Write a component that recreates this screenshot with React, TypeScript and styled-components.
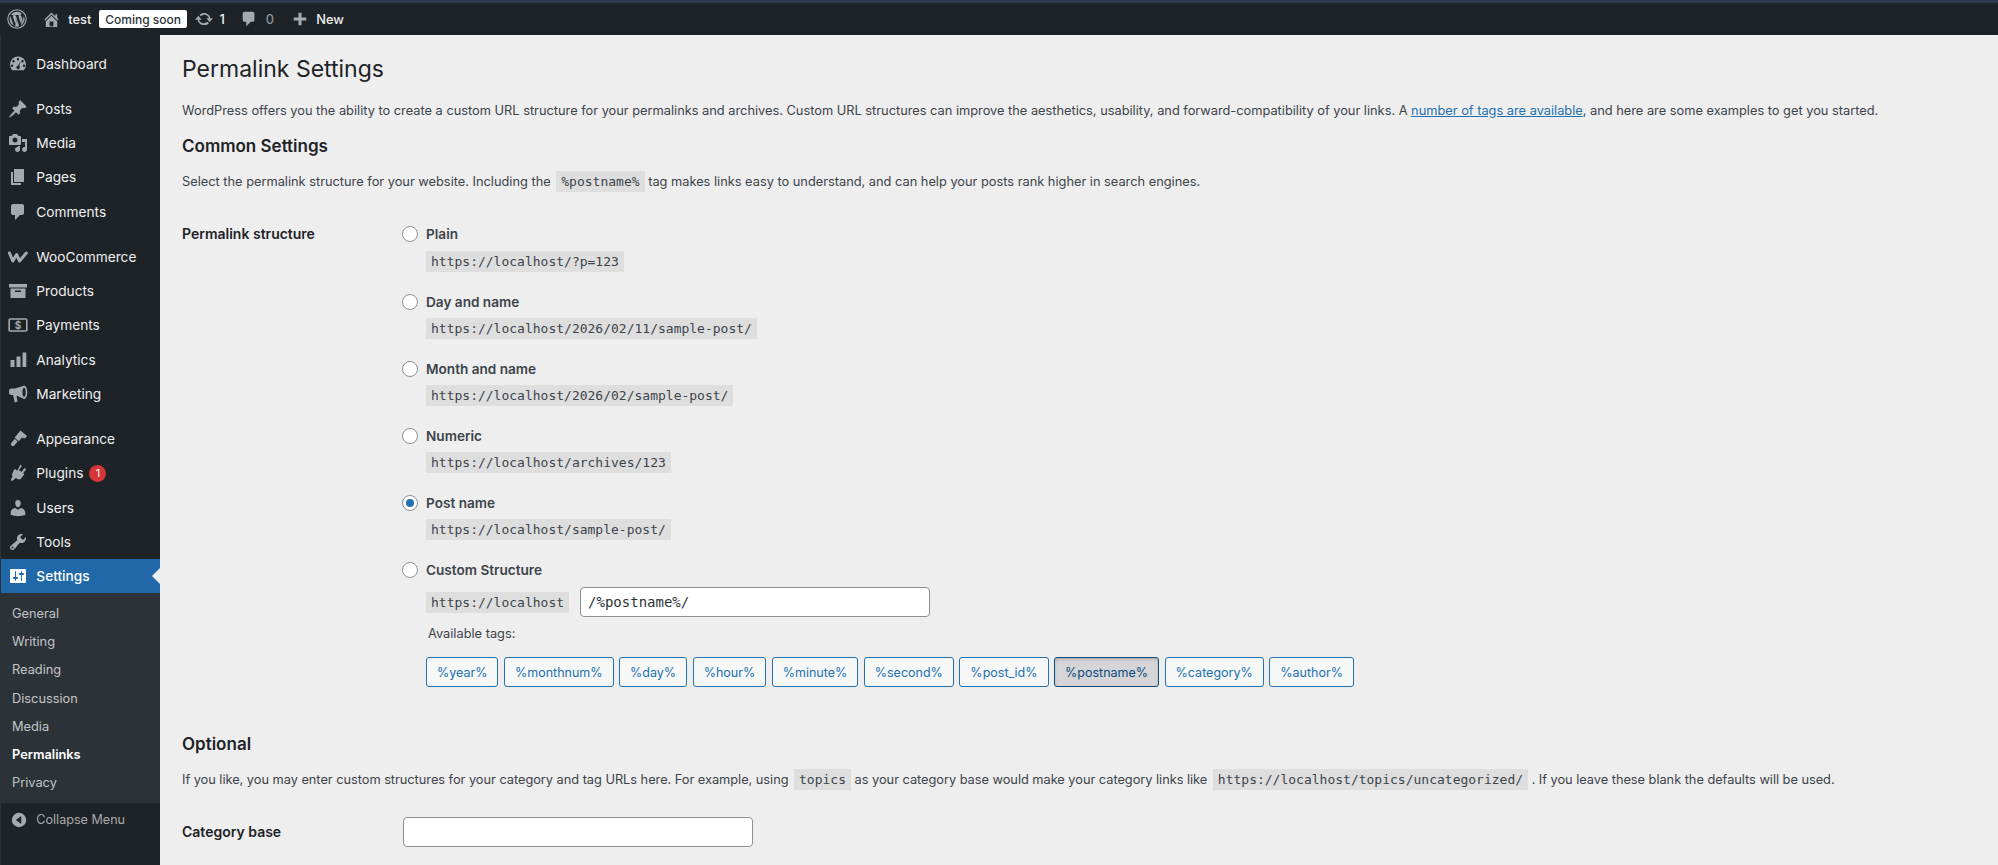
import React from 'react';
import styled, { createGlobalStyle } from 'styled-components';

const SANS = `Inter, "Liberation Sans", sans-serif`;
const MONO = `"DejaVu Sans Mono", "Liberation Mono", monospace`;

const Global = createGlobalStyle`
  html, body { margin: 0; padding: 0; height: 100%; }
  body { background: #eeeeee; font-family: ${SANS}; overflow: hidden; }
  * { box-sizing: border-box; }
`;

type IconName =
  | 'dashboard' | 'posts' | 'media' | 'pages' | 'comments' | 'woo' | 'products' | 'payments'
  | 'analytics' | 'marketing' | 'appearance' | 'plugins' | 'users' | 'tools' | 'settings';

function MenuIcon({ name }: { name: IconName }) {
  const p = { fill: 'currentColor' };
  switch (name) {
    case 'dashboard':
      return (
        <svg viewBox="0 0 20 20" {...p}>
          <path fillRule="evenodd" d="M10 2.500a8 8 0 0 0-8 8c0 2.200.9 4.200 2.300 5.700h11.400A8 8 0 0 0 18 10.500a8 8 0 0 0-8-8zM10 4a1.200 1.200 0 1 1 0 2.400A1.200 1.200 0 0 1 10 4zM5.500 6a1.200 1.200 0 1 1 0 2.400 1.200 1.200 0 0 1 0-2.400zm9 0a1.200 1.200 0 1 1 0 2.400 1.200 1.200 0 0 1 0-2.400zM4 10.500a1.200 1.200 0 1 1 0 2.400 1.200 1.200 0 0 1 0-2.400zm12 0a1.200 1.200 0 1 1 0 2.400 1.200 1.200 0 0 1 0-2.400zM12.800 7l-1.600 5a1.700 1.700 0 1 1-1.300-.3z" />
        </svg>
      );
    case 'posts':
      return <svg viewBox="0 0 20 20" {...p}><path d="M10.440 3.020l1.820-1.820 6.360 6.350-1.830 1.820c-1.050-.680-2.480-.570-3.410.360l-.750.750c-.920.930-1.040 2.350-.350 3.410l-1.830 1.820-2.410-2.410-2.800 2.790c-.420.420-3.380 2.710-3.800 2.290s1.860-3.390 2.280-3.810l2.790-2.790L4.100 9.360l1.830-1.820c1.050.690 2.480.570 3.400-.360l.750-.750c.930-.920 1.050-2.350.360-3.410z" /></svg>;
    case 'media':
      return <svg viewBox="0 0 20 20" {...p}><path d="M13 11V4c0-.550-.450-1-1-1h-1.670L9 1H5L3.670 3H2c-.550 0-1 .450-1 1v7c0 .550.450 1 1 1h10c.550 0 1-.450 1-1zM7 4.500c1.380 0 2.500 1.120 2.500 2.500S8.380 9.500 7 9.500 4.500 8.380 4.500 7 5.620 4.500 7 4.500zM14 6h5v10.500c0 1.380-1.120 2.500-2.500 2.500S14 17.880 14 16.500s1.120-2.500 2.500-2.500c.170 0 .340.020.500.050V9h-3V6zm-4 8.050V13h2v3.500c0 1.380-1.120 2.500-2.500 2.500S7 17.880 7 16.500 8.120 14 9.500 14c.170 0 .340.020.500.050z" /></svg>;
    case 'pages':
      return <svg viewBox="0 0 20 20" {...p}><path d="M6 15V2h10v13H6zm-1 1h8v2H3V5h2v11z" /></svg>;
    case 'comments':
      return <svg viewBox="0 0 20 20" {...p}><path d="M5 2h9c1.100 0 2 .9 2 2v7c0 1.100-.9 2-2 2h-2l-5 5v-5H5c-1.100 0-2-.9-2-2V4c0-1.100.9-2 2-2z" /></svg>;
    case 'woo':
      return <svg viewBox="0 0 20 20"><path d="M1.500 6 L4.800 14 L8.600 7.500 L11.600 14 L18.300 6" fill="none" stroke="currentColor" strokeWidth="3" strokeLinejoin="round" strokeLinecap="round" /></svg>;
    case 'products':
      return <svg viewBox="0 0 20 20" {...p}><path d="M1 3h18v3.500H1z" /><path fillRule="evenodd" d="M2.500 7.500h15V17h-15zM7 9.500v1.500h6V9.500z" /></svg>;
    case 'payments':
      return (
        <svg viewBox="0 0 20 20">
          <rect x="1.200" y="4" width="17.600" height="12" rx="1" fill="none" stroke="currentColor" strokeWidth="1.600" />
          <text x="10" y="14" textAnchor="middle" fontSize="10" fontWeight="700" fill="currentColor" fontFamily="Inter, sans-serif">$</text>
        </svg>
      );
    case 'analytics':
      return <svg viewBox="0 0 20 20" {...p}><path d="M2.500 10h4v7h-4zM8.500 6.500h4V17h-4zM14.500 2.500h3.800V17h-3.800z" /></svg>;
    case 'marketing':
      return <svg viewBox="0 0 20 20" {...p}><path fillRule="evenodd" d="M16 1.500c1.900 0 3.300 3 3.300 6.800s-1.400 6.800-3.300 6.800c-.6 0-1.100-.3-1.600-.8L8.500 11.500 9.500 17.500 6.800 18.500 5 11H3.500A2.500 2.500 0 0 1 1 8.500v-1.500A2.500 2.500 0 0 1 3.500 4.500H7l7.500-2.300c.400-.5 1-.7 1.500-.7zm.1 2.200c-.9 0-1.600 2-1.600 4.600s.7 4.600 1.600 4.600 1.600-2 1.600-4.600-.7-4.600-1.600-4.600z" /></svg>;
    case 'appearance':
      return <svg viewBox="0 0 20 20" {...p}><path d="M12.400 1.500 19 7l-2 2.500-1.300-.9-.5.900-1.300-.900-3 3.600-2.200-1.700-.5.700 1.500 1.300-3.200 3.800c-.8 1-1.800 1.100-2.800.4-1-.8-1-1.900-.2-2.900l3.200-3.800 1.500 1.100.5-.6-2.100-1.800z" /></svg>;
    case 'plugins':
      return <svg viewBox="0 0 20 20" {...p}><path d="M12.300 1.800l1.700 1.300-3.100 4 2.500 1.900 3.100-4 1.700 1.300-3.100 4 1.300 1-3.300 4.300c-1 1.200-2.700 1.300-4.100.2l-1.100-.9-3.700 3-1.600-.6 1.900-4.100-.700-1.500L5.500 7.800 7 5.900l2.200 1.800z" /></svg>;
    case 'users':
      return <svg viewBox="0 0 20 20" {...p}><path d="M10 9.250c-2.270 0-2.730-3.440-2.730-3.440C7 4.020 7.820 2 9.970 2c2.160 0 2.980 2.020 2.710 3.810 0 0-.410 3.440-2.680 3.440zm0 2.570L12.720 10c2.390 0 4.520 2.330 4.520 4.530v2.490s-3.650 1.130-7.240 1.130c-3.650 0-7.240-1.130-7.240-1.130v-2.490c0-2.250 1.940-4.480 4.470-4.480z" /></svg>;
    case 'tools':
      return <svg viewBox="0 0 20 20" {...p}><path d="M16.680 9.770c-1.340 1.340-3.300 1.670-4.950.990l-5.410 6.520c-.990.990-2.590.990-3.570 0s-.990-2.580 0-3.570l6.520-5.420c-.680-1.650-.350-3.610.990-4.950 1.280-1.280 3.120-1.620 4.720-1.060l-2.890 2.890 2.820 2.820 2.860-2.870c.530 1.580.180 3.410-1.090 4.650zM3.810 16.210c.400.390 1.030.390 1.420 0 .400-.400.400-1.030 0-1.430-.390-.390-1.020-.390-1.420 0-.390.400-.390 1.030 0 1.430z" /></svg>;
    case 'settings':
      return <svg viewBox="0 0 20 20" {...p}><path fillRule="evenodd" d="M18 16V4c0-.550-.450-1-1-1H3c-.550 0-1 .450-1 1v12c0 .550.450 1 1 1h14c.550 0 1-.450 1-1zM8 11h1c.550 0 1 .450 1 1s-.450 1-1 1H8v1.500c0 .280-.220.500-.500.500s-.500-.220-.500-.500V13H6c-.550 0-1-.450-1-1s.450-1 1-1h1V5.500c0-.280.220-.500.500-.500s.500.220.500.500V11zm5-2h-1c-.550 0-1-.450-1-1s.450-1 1-1h1V5.500c0-.280.220-.500.500-.500s.500.220.500.500V7h1c.550 0 1 .450 1 1s-.450 1-1 1h-1v5.500c0 .280-.220.500-.500.500s-.500-.220-.500-.500V9z" /></svg>;
  }
}

type MenuEntry = { name: IconName; label: string; badge?: string; gapBefore?: boolean };

const MENU: MenuEntry[] = [
  { name: 'dashboard', label: 'Dashboard' },
  { name: 'posts', label: 'Posts', gapBefore: true },
  { name: 'media', label: 'Media' },
  { name: 'pages', label: 'Pages' },
  { name: 'comments', label: 'Comments' },
  { name: 'woo', label: 'WooCommerce', gapBefore: true },
  { name: 'products', label: 'Products' },
  { name: 'payments', label: 'Payments' },
  { name: 'analytics', label: 'Analytics' },
  { name: 'marketing', label: 'Marketing' },
  { name: 'appearance', label: 'Appearance', gapBefore: true },
  { name: 'plugins', label: 'Plugins', badge: '1' },
  { name: 'users', label: 'Users' },
  { name: 'tools', label: 'Tools' },
];

const SUBMENU = ['General', 'Writing', 'Reading', 'Discussion', 'Media', 'Permalinks', 'Privacy'];

const STRUCTURES = [
  { label: 'Plain', url: 'https://localhost/?p=123' },
  { label: 'Day and name', url: 'https://localhost/2026/02/11/sample-post/' },
  { label: 'Month and name', url: 'https://localhost/2026/02/sample-post/' },
  { label: 'Numeric', url: 'https://localhost/archives/123' },
  { label: 'Post name', url: 'https://localhost/sample-post/', checked: true },
];

const TAGS = ['%year%', '%monthnum%', '%day%', '%hour%', '%minute%', '%second%', '%post_id%', '%postname%', '%category%', '%author%'];

export default function App() {
  return (
    <>
      <Global />
      <Page>
        <AdminBar>
          <BarLogo viewBox="0 0 20 20">
            <circle cx="10" cy="10" r="9.200" fill="none" stroke="currentColor" strokeWidth="1.100" />
            <path fill="currentColor" d="M2.600 10c0 2.900 1.700 5.400 4.100 6.600L3.200 7a7.400 7.400 0 0 0-.6 3zm12.400-.4c0-.9-.3-1.500-.6-2-.4-.6-.7-1.100-.7-1.700 0-.7.500-1.300 1.200-1.300h.1A7.400 7.400 0 0 0 3.800 6l.5 0c.8 0 2-.1 2-.1.400 0 .5.600.1.600 0 0-.4.100-.9.100l2.800 8.300 1.700-5-1.200-3.300c-.4 0-.8-.1-.8-.1-.4 0-.4-.600 0-.6 0 0 1.300.1 2 .1.800 0 2-.1 2-.1.400 0 .5.600.1.600 0 0-.4.100-.9.100l2.800 8.200.8-2.600c.3-1.100.6-1.900.6-2.600zM10.100 10.700l-2.300 6.700a7.400 7.400 0 0 0 4.500-.1l-.1-.1zm6.500-4.300.1.800c0 .7-.1 1.600-.6 2.700l-2.300 6.500a7.400 7.400 0 0 0 2.800-10z" />
          </BarLogo>
          <BarIcon viewBox="0 0 20 20" $size={19} $ml={15.400}>
            <path fill="currentColor" d="M16 8.500l1.530 1.530-1.060 1.060L10 4.620l-6.470 6.470-1.060-1.060L10 2.500l4 4v-2h2v4zm-6-2.460l6 5.990V18H4v-5.970zM12 17v-5H8v5h4z" />
          </BarIcon>
          <BarText $ml={6.900}>test</BarText>
          <ComingSoon>Coming soon</ComingSoon>
          <BarIcon viewBox="0 0 20 20" $size={18} $ml={7.500}>
            <path fill="currentColor" d="M10.200 3.280c3.530 0 6.430 2.610 6.930 6.010h2.730l-3.600 4.350-3.600-4.350h2.790c-.500-2.310-2.500-4-5.250-4-1.500 0-2.770.640-3.710 1.660L5.100 5.150c1.250-1.150 3.100-1.870 5.100-1.870zm-.400 13.440c-3.520 0-6.430-2.610-6.930-6H.140l3.600-4.350 3.600 4.350H4.550c.500 2.320 2.510 4 5.250 4 1.500 0 2.790-.640 3.730-1.640l1.930 1.800c-1.280 1.150-3.130 1.840-5.660 1.840z" />
          </BarIcon>
          <BarText $ml={7}>1</BarText>
          <BarIcon viewBox="0 0 20 20" $size={18} $ml={15}>
            <path fill="currentColor" d="M5 2h9c1.100 0 2 .9 2 2v7c0 1.100-.9 2-2 2h-2l-5 5v-5H5c-1.100 0-2-.9-2-2V4c0-1.100.9-2 2-2z" />
          </BarIcon>
          <BarText $ml={8} $dim>0</BarText>
          <BarIcon viewBox="0 0 20 20" $size={18} $ml={16.500}>
            <path fill="currentColor" d="M8.300 3h3.400v5.300H17v3.400h-5.300V17H8.300v-5.300H3V8.300h5.300z" />
          </BarIcon>
          <BarText $ml={7.700}>New</BarText>
        </AdminBar>

        <Body>
          <Sidebar>
            <MenuList>
              {MENU.map((item) => (
                <MenuItem key={item.label} $gap={item.gapBefore}>
                  <IconSlot><MenuIcon name={item.name} /></IconSlot>
                  {item.label}
                  {item.badge && <Badge>{item.badge}</Badge>}
                </MenuItem>
              ))}
              <ActiveItem>
                <IconSlot $active><MenuIcon name="settings" /></IconSlot>
                Settings
                <ActiveArrow />
              </ActiveItem>
              <SubMenu>
                {SUBMENU.map((s) => (
                  <SubItem key={s} $current={s === 'Permalinks'}>{s}</SubItem>
                ))}
              </SubMenu>
              <Collapse>
                <CollapseIcon viewBox="0 0 20 20">
                  <path fill="currentColor" fillRule="evenodd" d="M10 2a8 8 0 1 1 0 16 8 8 0 0 1 0-16zm2.500 3.500L6.500 10l6 4.500z" />
                </CollapseIcon>
                Collapse Menu
              </Collapse>
            </MenuList>
          </Sidebar>

          <Content>
            <Title>Permalink Settings</Title>
            <Intro>
              WordPress offers you the ability to create a custom URL structure for your permalinks and archives. Custom URL structures can improve the aesthetics, usability, and forward-compatibility of your links. A <DocLink>number of tags are available</DocLink>, and here are some examples to get you started.
            </Intro>
            <SectionTitle>Common Settings</SectionTitle>
            <Para>
              Select the permalink structure for your website. Including the <InlineCode>%postname%</InlineCode> tag makes links easy to understand, and can help your posts rank higher in search engines.
            </Para>

            <FormRow>
              <RowLabel>Permalink structure</RowLabel>
              <Options>
                {STRUCTURES.map((s) => (
                  <Option key={s.label}>
                    <RadioLine>
                      <Radio $checked={s.checked} />
                      <OptionLabel>{s.label}</OptionLabel>
                    </RadioLine>
                    <OptionValue><Code>{s.url}</Code></OptionValue>
                  </Option>
                ))}
                <Option>
                  <RadioLine>
                    <Radio />
                    <OptionLabel>Custom Structure</OptionLabel>
                  </RadioLine>
                  <CustomLine>
                    <Code>https://localhost</Code>
                    <TextInput $width={350} $mono defaultValue="/%postname%/" />
                  </CustomLine>
                  <TagsLabel>Available tags:</TagsLabel>
                  <Tags>
                    {TAGS.map((t) => (
                      <TagButton key={t} $pressed={t === '%postname%'}>{t}</TagButton>
                    ))}
                  </Tags>
                </Option>
              </Options>
            </FormRow>

            <OptionalTitle>Optional</OptionalTitle>
            <OptionalPara>
              If you like, you may enter custom structures for your category and tag URLs here. For example, using <InlineCode>topics</InlineCode> as your category base would make your category links like <InlineCode>https://localhost/topics/uncategorized/</InlineCode> . If you leave these blank the defaults will be used.
            </OptionalPara>
            <BaseRow>
              <RowLabel>Category base</RowLabel>
              <BaseInput $width={350} />
            </BaseRow>
          </Content>
        </Body>
      </Page>
    </>
  );
}

const Page = styled.div`
  width: 1998px;
  height: 865px;
  display: flex;
  flex-direction: column;
  overflow: hidden;
  color: #1d2327;
`;

const AdminBar = styled.div`
  height: 35px;
  flex: none;
  display: flex;
  align-items: center;
  padding-left: 7px;
  background: #1d2327;
  border-top: 3px solid #2e3a4d;
  color: #a7aaad;
`;

const BarLogo = styled.svg`
  width: 20px;
  height: 20px;
  flex: none;
`;

const BarIcon = styled.svg<{ $size: number; $ml: number }>`
  width: ${(p) => p.$size}px;
  height: ${(p) => p.$size}px;
  margin-left: ${(p) => p.$ml}px;
  flex: none;
`;

const BarText = styled.span<{ $ml: number; $dim?: boolean }>`
  margin-left: ${(p) => p.$ml}px;
  font-size: 12.800px;
  font-weight: 500;
  color: ${(p) => (p.$dim ? '#8c8f94' : '#f0f0f1')};
`;

const ComingSoon = styled.span`
  margin-left: 8px;
  height: 18px;
  padding: 0 6px;
  display: flex;
  align-items: center;
  border-radius: 2px;
  background: #fff;
  color: #2c3338;
  font-size: 12px;
  font-weight: 500;
`;

const Body = styled.div`
  flex: 1;
  display: flex;
  min-height: 0;
`;

const Sidebar = styled.div`
  width: 160px;
  flex: none;
  background: #1d2327;
  border-left: 1px solid #2c3338;
`;

const MenuList = styled.div`
  display: flex;
  flex-direction: column;
  padding-top: 11.500px;
`;

const MenuItem = styled.div<{ $gap?: boolean }>`
  height: 34.300px;
  flex: none;
  display: flex;
  align-items: center;
  margin-top: ${(p) => (p.$gap ? '10.800px' : '0')};
  color: #f0f0f1;
  font-size: 13.700px;
`;

const IconSlot = styled.span<{ $active?: boolean }>`
  width: 35.300px;
  padding-left: 7px;
  flex: none;
  display: flex;
  color: ${(p) => (p.$active ? '#fff' : '#a7aaad')};

  svg {
    width: 20px;
    height: 20px;
  }
`;

const Badge = styled.span`
  width: 17px;
  height: 17px;
  margin-left: 6px;
  border-radius: 50%;
  display: flex;
  align-items: center;
  justify-content: center;
  background: #d63638;
  color: #fff;
  font-size: 11px;
`;

const ActiveItem = styled(MenuItem)`
  position: relative;
  background: #2068a8;
  color: #fff;
  font-weight: 500;
`;

const ActiveArrow = styled.span`
  position: absolute;
  right: 0;
  top: 50%;
  margin-top: -8px;
  border: 8px solid transparent;
  border-left-width: 0;
  border-right-color: #eeeeee;
`;

const SubMenu = styled.div`
  display: flex;
  flex-direction: column;
  padding: 6px 0;
  background: #2c3338;
`;

const SubItem = styled.div<{ $current?: boolean }>`
  height: 28.200px;
  padding-left: 11px;
  display: flex;
  align-items: center;
  font-size: 12.800px;
  font-weight: ${(p) => (p.$current ? 600 : 400)};
  color: ${(p) => (p.$current ? '#fff' : '#c3c4c7')};
`;

const Collapse = styled.div`
  height: 34px;
  display: flex;
  align-items: center;
  padding-left: 9px;
  color: #a7aaad;
  font-size: 12.600px;
`;

const CollapseIcon = styled.svg`
  width: 18px;
  height: 18px;
  margin-right: 8.300px;
`;

const Content = styled.div`
  flex: 1;
  min-width: 0;
  padding: 20px 0 0 22px;
  font-size: 12.800px;
  background: #eeeeee;
`;

const Title = styled.h1`
  margin: 0;
  font-size: 23px;
  line-height: 29px;
  font-weight: 400;
  color: #1d2327;
`;

const Intro = styled.p`
  margin: 17.700px 0 0;
  line-height: 18px;
  color: #3c434a;
  white-space: nowrap;
`;

const DocLink = styled.a`
  color: #2271b1;
  text-decoration: underline;
`;

const SectionTitle = styled.h2`
  margin: 15.300px 0 0;
  font-size: 17px;
  line-height: 22px;
  font-weight: 600;
  color: #1d2327;
`;

const OptionalTitle = styled(SectionTitle)`
  margin-top: 46px;
`;

const Para = styled.p`
  margin: 13px 0 0;
  line-height: 24px;
  color: #3c434a;
  white-space: nowrap;
`;

const OptionalPara = styled(Para)`
  letter-spacing: -0.030px;
`;

const Code = styled.code`
  display: inline-block;
  height: 21px;
  line-height: 21px;
  padding: 0 5px;
  background: #dedede;
  color: #3c434a;
  font-family: ${MONO};
  font-size: 13px;
  letter-spacing: 0;
`;

const InlineCode = styled(Code)`
  margin-left: 2px;
`;

const FormRow = styled.div`
  display: flex;
  margin-top: 31.500px;
`;

const RowLabel = styled.div`
  width: 220px;
  flex: none;
  font-size: 14px;
  line-height: 18px;
  font-weight: 600;
  color: #1d2327;
`;

const Options = styled.div`
  display: flex;
  flex-direction: column;
  gap: 21px;
`;

const Option = styled.div`
  display: flex;
  flex-direction: column;
`;

const RadioLine = styled.div`
  display: flex;
  align-items: center;
  height: 18px;
`;

const Radio = styled.span<{ $checked?: boolean }>`
  width: 16px;
  height: 16px;
  border-radius: 50%;
  border: 1px solid #8c8f94;
  background: #fff;
  display: flex;
  align-items: center;
  justify-content: center;
  flex: none;

  &::after {
    content: '';
    display: ${(p) => (p.$checked ? 'block' : 'none')};
    width: 8px;
    height: 8px;
    border-radius: 50%;
    background: #2271b1;
  }
`;

const OptionLabel = styled.span`
  margin-left: 8px;
  font-size: 13.600px;
  font-weight: 600;
  color: #3c434a;
`;

const OptionValue = styled.div`
  display: flex;
  margin: 7.200px 0 0 24px;
`;

const CustomLine = styled.div`
  margin: 8px 0 0 24px;
  display: flex;
  align-items: center;
  gap: 11px;
`;

const TextInput = styled.input<{ $width: number; $mono?: boolean }>`
  width: ${(p) => p.$width}px;
  height: 30px;
  padding: 0 7px;
  border: 1px solid #8c8f94;
  border-radius: 4px;
  background: #fff;
  color: #2c3338;
  font-family: ${(p) => (p.$mono ? MONO : SANS)};
  font-size: 14px;
  outline: none;
`;

const BaseInput = styled(TextInput)`
  margin-left: 1px;
`;

const TagsLabel = styled.div`
  margin: 8px 0 0 26px;
  font-size: 12.800px;
  line-height: 18px;
  color: #3c434a;
`;

const Tags = styled.div`
  margin: 14px 0 0 24px;
  display: flex;
  gap: 5.500px;
`;

const TagButton = styled.button<{ $pressed?: boolean }>`
  height: 30px;
  padding: 0 10px;
  border: 1px solid ${(p) => (p.$pressed ? '#0a4b78' : '#2271b1')};
  border-radius: 3px;
  background: ${(p) => (p.$pressed ? '#d5d5d8' : '#f6f7f7')};
  color: ${(p) => (p.$pressed ? '#0a4b78' : '#2271b1')};
  font-family: ${SANS};
  font-size: 12.500px;
  box-shadow: ${(p) => (p.$pressed ? 'inset 0 2px 5px -3px rgba(0,0,0,0.5)' : 'none')};
`;

const BaseRow = styled.div`
  display: flex;
  align-items: center;
  margin-top: 25px;
`;
